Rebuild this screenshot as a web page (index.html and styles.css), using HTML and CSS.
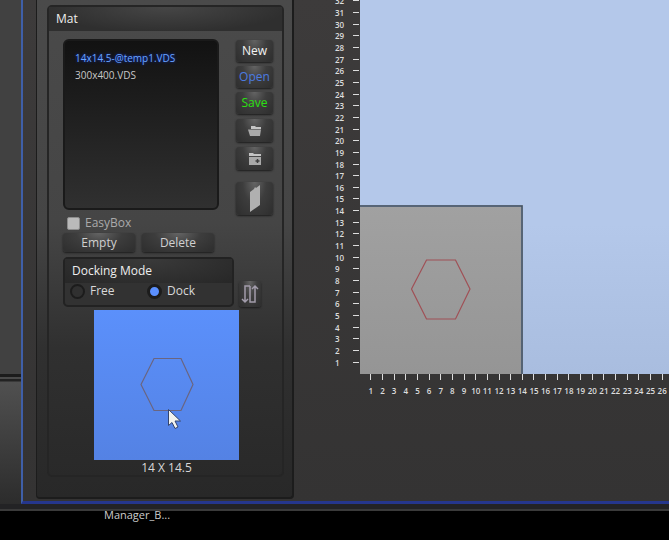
FILE: index.html
```html
<!DOCTYPE html>
<html lang="en">
<head>
<meta charset="utf-8">
<title>Mat</title>
<link rel="stylesheet" href="styles.css">
</head>
<body>
<div class="stage">
  <div class="backdrop"><div class="backdrop-top"></div><div class="backdrop-bottom"></div></div>
  <main class="window">
    <aside class="sidebar">
      <section class="group">
        <h2 class="group-title">Mat</h2>
        <div class="files">
          <ul class="file-list">
            <li class="selected">14x14.5-@temp1.VDS</li>
            <li>300x400.VDS</li>
          </ul>
          <div class="actions">
            <button class="btn">New</button>
            <button class="btn open">Open</button>
            <button class="btn save">Save</button>
            <button class="btn icon" aria-label="Open folder">
              <svg width="14" height="14" viewBox="0 0 14 14"><path d="M3 5V2h4l1 1h5v2z" fill="#c4c4c4"/><path d="M0 5.500h13l-1 6.500H2z" fill="#a9a9a9"/><path d="M2 5.500h10" stroke="#707070"/></svg>
            </button>
            <button class="btn icon" aria-label="Add folder">
              <svg width="14" height="14" viewBox="0 0 14 14"><path d="M1 4V1h4l1 1h7v2z" fill="#c4c4c4"/><path d="M1 5h12v8H1z" fill="#a9a9a9"/><path d="M9.500 7v4M7.500 9h4" stroke="#404040" stroke-width="1.500"/></svg>
            </button>
            <button class="btn tall" aria-label="Sheet">
              <svg width="12" height="28" viewBox="0 0 12 28"><path d="M1 7L5 4l1-2 1 1 4-3v20L1 27z" fill="#b0b0b0"/></svg>
            </button>
          </div>
        </div>
        <label class="easy"><input type="checkbox">EasyBox</label>
        <div class="row">
          <button class="btn">Empty</button>
          <button class="btn">Delete</button>
        </div>
        <div class="dock-row">
          <fieldset class="dock">
            <legend>Docking Mode</legend>
            <div class="choices">
              <label><input type="radio" name="mode">Free</label>
              <label><input type="radio" name="mode" checked>Dock</label>
            </div>
          </fieldset>
          <button class="btn swap" aria-label="Swap direction">
            <svg width="18" height="20" viewBox="0 0 18 20" fill="none" stroke="#a29cab" stroke-width="1.500"><path d="M9 2H4v15M1 15l3 3 3-3M9 2v16h5V3M11 5l3-3 3 3"/></svg>
          </button>
        </div>
        <figure class="preview">
          <div class="preview-sheet">
            <svg width="145" height="150" viewBox="0 0 145 150">
              <path d="M47 74.500L60 48.500h27L99 74.500 87 100.500H60z" fill="none" stroke="#6a6580" stroke-width="1.200"/>
              <path d="M74.500 99.500v16l3.500-3 3 6 3-1.500-3-6h5.500z" fill="#f2f3ee" stroke="#34446c"/>
            </svg>
          </div>
          <figcaption>14 X 14.5</figcaption>
        </figure>
      </section>
    </aside>
    <section class="plot">
      <div class="ruler-y">
        <span>32</span><span>31</span><span>30</span><span>29</span><span>28</span><span>27</span><span>26</span><span>25</span><span>24</span><span>23</span><span>22</span><span>21</span><span>20</span><span>19</span><span>18</span><span>17</span><span>16</span><span>15</span><span>14</span><span>13</span><span>12</span><span>11</span><span>10</span><span>9</span><span>8</span><span>7</span><span>6</span><span>5</span><span>4</span><span>3</span><span>2</span><span>1</span>
      </div>
      <div class="board">
        <svg width="163" height="169" viewBox="0 0 163 169">
          <defs><linearGradient id="sheet" x2="0" y2="1"><stop stop-color="#a1a1a1"/><stop offset="1" stop-color="#959595"/></linearGradient></defs>
          <path d="M0 0h163v169H0z" fill="url(#sheet)"/>
          <path d="M0 1h162v168" fill="none" stroke="#3f5268" stroke-width="1.500"/>
          <path d="M51.500 84L66.500 55h29l14.500 29-14.500 30h-29z" fill="none" stroke="#a05056" stroke-width="1.200"/>
        </svg>
      </div>
      <div class="ruler-x">
        <span>1</span><span>2</span><span>3</span><span>4</span><span>5</span><span>6</span><span>7</span><span>8</span><span>9</span><span>10</span><span>11</span><span>12</span><span>13</span><span>14</span><span>15</span><span>16</span><span>17</span><span>18</span><span>19</span><span>20</span><span>21</span><span>22</span><span>23</span><span>24</span><span>25</span><span>26</span>
      </div>
    </section>
  </main>
</div>
<footer class="desktop"><span>Manager_B...</span></footer>
</body>
</html>
```
FILE: styles.css
```css
* { box-sizing: border-box; }

body {
  margin: 0;
  min-height: 100vh;
  display: flex;
  flex-direction: column;
  overflow: hidden;
  background: #000;
  color: #d8d8d8;
  font: 12px/16px "Open Sans", "Noto Sans", sans-serif;
}

.stage {
  display: flex;
  padding-bottom: 5px;
  background: #232325;
  border-bottom: 2px solid #3a3a3a;
}

.backdrop {
  width: 21px;
  display: flex;
  flex-direction: column;
}
.backdrop-top {
  flex: 3;
  background: #414141;
  border-bottom: 3px solid #1c1c1c;
}
.backdrop-bottom {
  flex: 1;
  border-top: 2px solid #4a4a4a;
  background: linear-gradient(#222 0 2px, #505050 3px, #2c2c2c);
}

.window {
  flex: 1;
  min-width: 0;
  display: flex;
  background: linear-gradient(#3d3b3b, #343333);
  border-left: 2px solid #3f5fa8;
  border-bottom: 3px solid #25368c;
}

/* Side panel */
.sidebar {
  flex: none;
  width: 258px;
  margin: 0 0 2px 13px;
  padding: 5px 8px 20px 10px;
  border: solid #1c1c1c;
  border-width: 0 2px 2px 1px;
  border-radius: 0 0 4px 4px;
  background: linear-gradient(#4a4a4a, #454545 45%, #303030 70%, #282828);
}
.group {
  border: 2px solid #252525;
  border-radius: 5px;
  padding: 0 9px 0 14px;
}
.group-title {
  margin: 0 -9px 0 -14px;
  padding: 4px 7px;
  height: 24px;
  font-size: 12px;
  font-weight: 500;
  color: #eee;
  background: radial-gradient(ellipse at 50% 0, #464646, #2f2f2f 75%);
}

.files {
  display: flex;
  justify-content: space-between;
  margin-top: 8px;
}
.file-list {
  width: 156px;
  height: 171px;
  margin: 0;
  padding: 9px 10px;
  list-style: none;
  font-size: 10px;
  line-height: 17px;
  color: #c8c8c8;
  border: 2px solid #1a1a1a;
  border-radius: 6px;
  background: linear-gradient(#121212, #303030);
}
.file-list .selected {
  color: #68a5ff;
  text-shadow: 0 0 3px #0c36e0;
}

.btn {
  padding: 0;
  font: inherit;
  color: #d0d0d0;
  border: 0;
  border-radius: 3px;
  background: radial-gradient(ellipse at 50% 0, #646464, #3d3d3d 45%, #303030 90%);
  box-shadow: 0 1px 2px #1c1c1c;
}
.actions {
  width: 37px;
  display: flex;
  flex-direction: column;
  gap: 4px;
  padding-top: 1px;
}
.actions .btn { height: 22px; line-height: 20px; color: #f2f2f2; }
.actions .open { color: #4c7be0; }
.actions .save { color: #2be010; }
.actions .icon { height: 23px; margin-top: 1px; }
.actions .tall { height: 33px; margin-top: 8px; }
.btn svg { display: block; margin: 0 auto; }

.easy {
  display: flex;
  align-items: center;
  gap: 5px;
  margin: 0 0 2px 4px;
  color: #aaa;
}
.easy input {
  appearance: none;
  width: 13px;
  height: 13px;
  margin: 0;
  border: 1px solid #8c8c8c;
  border-radius: 2px;
  background: #bababa;
}

.row { display: flex; gap: 7px; }
.row .btn { width: 72px; height: 19px; line-height: 18px; }

.dock-row {
  display: flex;
  align-items: flex-end;
  gap: 5px;
  margin-top: 5px;
}
.dock {
  width: 171px;
  min-width: 0;
  margin: 0;
  padding: 0;
  border: 2px solid #222;
  border-radius: 5px;
  background: #323232;
}
.dock legend {
  float: left;
  width: 100%;
  height: 24px;
  padding: 4px 7px;
  color: #eee;
  background: radial-gradient(ellipse at 50% 0, #3a3a3a, #272727);
}
.choices {
  clear: both;
  display: grid;
  grid-template-columns: 77px 1fr;
  padding: 0 5px 6px;
}
.choices label { display: flex; align-items: center; gap: 5px; }
.choices input {
  appearance: none;
  width: 15px;
  height: 15px;
  margin: 0;
  border: 2px solid #1c1c1c;
  border-radius: 50%;
  background: #303030;
}
.choices input:checked {
  border-width: 3px;
  background: #5b90ff;
}
.swap { width: 22px; height: 26px; }

.preview {
  width: 145px;
  margin: 3px 0 0 31px;
  text-align: center;
}
.preview-sheet { background: linear-gradient(#5b90fb, #5482e4); }
.preview svg { display: block; }
.preview figcaption { line-height: 15px; }

/* Work area with its rulers */
.plot {
  flex: 1;
  min-width: 0;
  display: grid;
  grid-template: 374px auto / 66px 1fr;
  align-content: start;
  overflow: hidden;
  font-size: 8px;
  font-weight: 600;
  line-height: 11px;
  color: #ddd;
}
.ruler-y {
  display: grid;
  grid-auto-rows: 1fr;
  margin: -5px 0 6px;
  padding: 0 1px 0 41px;
}
.ruler-y span {
  display: flex;
  align-items: center;
  justify-content: space-between;
}
.ruler-y span::after {
  content: "";
  width: 6px;
  height: 1px;
  background: #ddd;
}
.board {
  display: flex;
  align-items: flex-end;
  background: linear-gradient(#b4c8ea 60%, #a9bddf);
}
.ruler-x {
  grid-column: 2;
  display: grid;
  grid-template-columns: repeat(26, 1fr);
  width: 303px;
  margin-left: 5px;
}
.ruler-x span {
  display: flex;
  flex-direction: column;
  align-items: center;
  gap: 5px;
  min-width: 0;
}
.ruler-x span::before {
  content: "";
  width: 1px;
  height: 6px;
  background: #ddd;
}

/* Desktop below the window */
.desktop {
  flex: 1;
  overflow: hidden;
  padding-left: 104px;
  font-size: 11px;
  line-height: 8px;
  color: #ccc;
}
```
